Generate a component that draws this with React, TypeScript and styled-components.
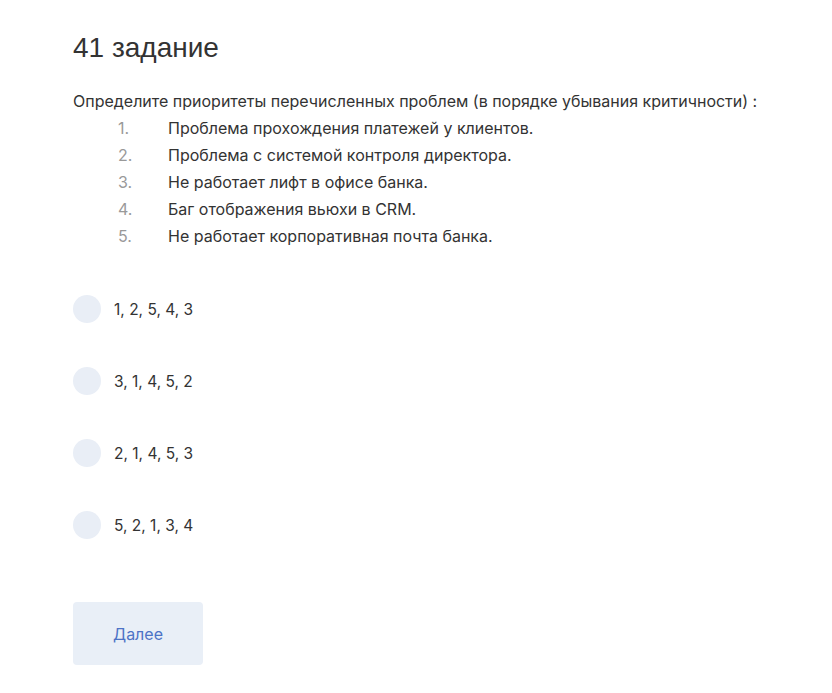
import React from "react";
import styled, { createGlobalStyle } from "styled-components";

const Global = createGlobalStyle`
  html, body { margin: 0; padding: 0; background: #fff; }
  body { font-family: Inter, "Liberation Sans", Arial, sans-serif; color: #333; }
`;

const Page = styled.div`
  padding: 30px 0 0 73px;
  box-sizing: border-box;
  min-height: 693px;
`;

const Title = styled.h1`
  margin: 0;
  font-family: "Liberation Sans", Arial, sans-serif;
  font-size: 28px;
  font-weight: 400;
  line-height: 36px;
  color: #333;
`;

const Question = styled.p`
  margin: 22px 0 0;
  font-size: 16px;
  line-height: 27px;
  color: #333;
`;

const List = styled.ol`
  list-style: none;
  margin: 0;
  padding: 0 0 0 45px;
`;

const Item = styled.li`
  display: flex;
  font-size: 16px;
  line-height: 27px;
`;

const Num = styled.span`
  width: 50px;
  color: #999;
`;

const Options = styled.div`
  display: flex;
  flex-direction: column;
  gap: 44px;
  margin-top: 45px;
`;

const Option = styled.label`
  display: flex;
  align-items: center;
  gap: 13px;
  height: 28px;
  font-size: 15.5px;
  color: #333;
  cursor: pointer;
`;

const Radio = styled.span`
  width: 28px;
  height: 28px;
  border-radius: 50%;
  background: #e9eef6;
  flex-shrink: 0;
`;

const Button = styled.button`
  margin-top: 63px;
  width: 130px;
  height: 63px;
  border: none;
  border-radius: 4px;
  background: #e9eff7;
  color: #4d73c6;
  font-family: inherit;
  font-size: 16px;
  cursor: pointer;
`;

const problems = [
  "Проблема прохождения платежей у клиентов.",
  "Проблема с системой контроля директора.",
  "Не работает лифт в офисе банка.",
  "Баг отображения вьюхи в CRM.",
  "Не работает корпоративная почта банка.",
];

const answers = ["1, 2, 5, 4, 3", "3, 1, 4, 5, 2", "2, 1, 4, 5, 3", "5, 2, 1, 3, 4"];

export default function App() {
  return (
    <>
      <Global />
      <Page>
        <Title>41 задание</Title>
        <Question>Определите приоритеты перечисленных проблем (в порядке убывания критичности) :</Question>
        <List>
          {problems.map((p, i) => (
            <Item key={i}>
              <Num>{i + 1}.</Num>
              <span>{p}</span>
            </Item>
          ))}
        </List>
        <Options>
          {answers.map((a) => (
            <Option key={a}>
              <Radio />
              <span>{a}</span>
            </Option>
          ))}
        </Options>
        <Button>Далее</Button>
      </Page>
    </>
  );
}
